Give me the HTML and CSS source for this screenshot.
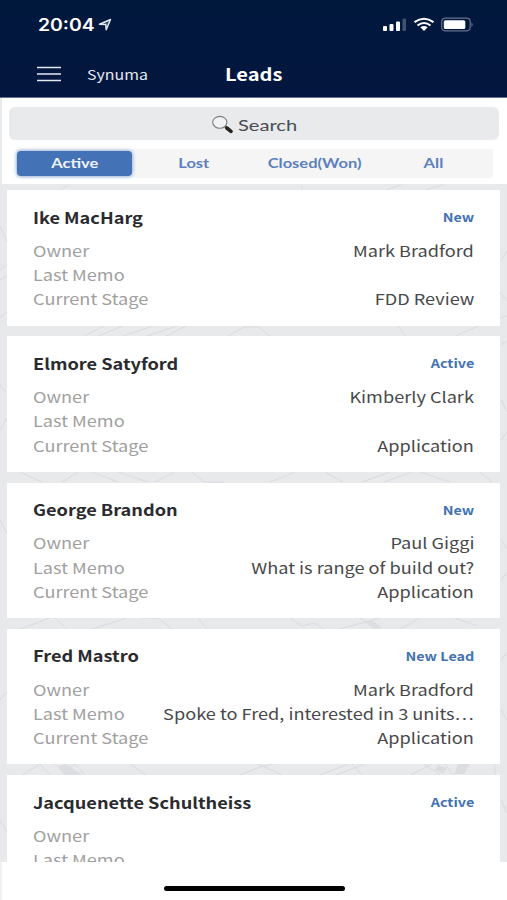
FILE: index.html
```html
<!DOCTYPE html>
<html lang="en">
<head>
<meta charset="utf-8">
<title>Leads</title>
<link rel="stylesheet" href="styles.css">
</head>
<body>
<div class="screen">
  <header class="top">
    <div class="status">
      <span class="time">20:04</span>
      <svg class="loc" width="15" height="14" viewBox="0 0 15 14"><path d="M1.500 6.200 12.500 1.500 8.200 11.800 7.800 6.600Z" fill="#dfe5f0" fill-opacity=".25" stroke="#dfe5f0" stroke-width="1.500" stroke-linejoin="round"/></svg>
      <svg class="sys" width="92" height="16" viewBox="0 0 92 16">
        <g fill="#fff"><rect x="0" y="9" width="4" height="5" rx="1"/><rect x="6.500" y="7" width="4" height="7" rx="1"/><rect x="13" y="4.500" width="4" height="9.500" rx="1"/><rect x="19.500" y="1.500" width="3.500" height="12.500" rx="1" opacity=".25"/></g>
        <g fill="none" stroke="#fff" stroke-width="2.100"><path d="M31.500 5.200Q41 -1.800 50.500 5.200"/><path d="M34.500 8.500Q41 3.500 47.500 8.500"/></g>
        <path d="M37.400 10.300Q41 7.500 44.600 10.300L41 14Z" fill="#fff"/>
        <rect x="58.700" y="1.200" width="28.500" height="12.600" rx="3.500" fill="none" stroke="#66728d" stroke-width="1.200"/>
        <rect x="60.800" y="3.200" width="21.500" height="8.800" rx="1.600" fill="#fff"/>
        <path d="M88.500 5.200Q91 7.500 88.500 9.800Z" fill="#66728d"/>
      </svg>
    </div>
    <nav class="nav">
      <svg class="menu" width="24" height="16" viewBox="0 0 24 16"><path d="M0 1.500H24M0 8H24M0 14.500H24" stroke="#e4e8f1" stroke-width="1.700"/></svg>
      <span class="brand">Synuma</span>
      <h1 class="title">Leads</h1>
    </nav>
  </header>
  <section class="filters">
    <div class="search">
      <svg width="24" height="20" viewBox="0 0 24 20"><ellipse cx="8.800" cy="7.300" rx="7.100" ry="5.900" fill="#f1f2f4" stroke="#7d8084" stroke-width="1.100"/><path d="m13.600 11.500 2 1.500" stroke="#777" stroke-width="1.500"/><path d="m15.800 13 4.200 3.400" stroke="#242424" stroke-width="3.700" stroke-linecap="round"/></svg>
      <span class="hint">Search</span>
    </div>
    <div class="tabs">
      <div class="tab on"><span>Active</span></div>
      <div class="tab"><span>Lost</span></div>
      <div class="tab"><span>Closed(Won)</span></div>
      <div class="tab"><span>All</span></div>
    </div>
  </section>
  <main class="list">
    <svg class="map" width="507" height="678" viewBox="0 184 507 678">
      <g fill="none" stroke="#d6d7da" stroke-width=".8"><path d="M84 336l20-10M98 336l25-10M123 336l30-10M147 336l30-10M166 336l20-10M228 336l16-9h14l12 9M398 326l7 10M455 336l33-14 19-6M500 292l7 9M501 260l6-9M501 345l6-4M0 226l7 16M0 270l7-5M0 280l7-4M0 318l7-6M0 385l7 8M0 430l7-12M0 520l7 14M0 700l7-8M0 820l7 12"/><path d="M20 472l22 10M62 482l16-10M92 472l26 10M118 472l30 10M155 482l20-10M192 472l12 10h20M270 482l25-10M325 472l18 10M362 482l28-10M384 482l28-10M420 472l30 10M480 472l12 10M501 400l6 12M501 440l6-8M501 540l6 9M501 580l6-8"/><path d="M20 629l30-11M55 618l12 11M92 629l35-11M140 618h18l14 11M198 618l9 11M290 618l12 8 12-3 10 6M340 629l40-11M360 618l20 11M400 629l20-11M455 618l22 8M501 660l6-8M501 710l6 10M501 800l6 13"/><path d="M22 775l18-11 10 11M55 764l8 8 12-8 10 11M130 764l16 11M240 775l20-8 13-3M258 764l24 11M320 775l28-11M336 775l28-11M352 764l10 11M410 775l22-11M424 764l16 11M445 764l8 11M495 764v11M302 190v-4M386 190l15-5M425 190l18-5M60 190l8-5"/></g>
      <g fill="#dcdde0"><path d="M64 775l-6-9 8-2 16 11zM438 765l9 3-4 6-8-4zM458 764h12l-6 10h-10zM372 620l10 8-8 1-8-6z"/></g>
    </svg>
    <article class="card">
      <div class="head"><b class="name">Ike MacHarg</b><b class="state">New</b></div>
      <div class="row"><span class="key">Owner</span><span class="val">Mark Bradford</span></div>
      <div class="row"><span class="key">Last Memo</span></div>
      <div class="row"><span class="key">Current Stage</span><span class="val">FDD Review</span></div>
    </article>
    <article class="card">
      <div class="head"><b class="name">Elmore Satyford</b><b class="state">Active</b></div>
      <div class="row"><span class="key">Owner</span><span class="val">Kimberly Clark</span></div>
      <div class="row"><span class="key">Last Memo</span></div>
      <div class="row"><span class="key">Current Stage</span><span class="val">Application</span></div>
    </article>
    <article class="card">
      <div class="head"><b class="name">George Brandon</b><b class="state">New</b></div>
      <div class="row"><span class="key">Owner</span><span class="val">Paul Giggi</span></div>
      <div class="row"><span class="key">Last Memo</span><span class="val">What is range of build out?</span></div>
      <div class="row"><span class="key">Current Stage</span><span class="val">Application</span></div>
    </article>
    <article class="card">
      <div class="head"><b class="name">Fred Mastro</b><b class="state">New Lead</b></div>
      <div class="row"><span class="key">Owner</span><span class="val">Mark Bradford</span></div>
      <div class="row"><span class="key">Last Memo</span><span class="val">Spoke to Fred, interested in 3 units…</span></div>
      <div class="row"><span class="key">Current Stage</span><span class="val">Application</span></div>
    </article>
    <article class="card">
      <div class="head"><b class="name">Jacquenette Schultheiss</b><b class="state">Active</b></div>
      <div class="row"><span class="key">Owner</span></div>
      <div class="row"><span class="key">Last Memo</span></div>
    </article>
  </main>
  <footer class="bottom"><div class="home"></div></footer>
</div>
</body>
</html>
```
FILE: styles.css
```css
* { box-sizing: border-box; }
body { margin: 0; background: #fff; font-family: "Noto Sans CJK SC", "Noto Sans", sans-serif; }
.screen { width: 507px; height: 900px; display: flex; flex-direction: column; overflow: hidden; }
.top { height: 98px; flex: none; background: linear-gradient(#01183d, #03163f); border-bottom: 1px solid #66718b; color: #fff; }
.status { height: 49px; padding: 0 32px 0 38px; display: flex; align-items: center; }
.time { font: 600 17px/20px Inter, sans-serif; width: 57px; white-space: nowrap; transform: scaleX(1.14); transform-origin: left; }
.loc { margin-left: 3px; }
.sys { margin-left: auto; }
.nav { height: 49px; padding-left: 37px; display: grid; grid-template-columns: 50px 138px 1fr; align-items: center; }
.brand { font: 400 13.5px/20px "Noto Sans CJK SC", sans-serif; color: #e2e7f1; transform: scaleX(1.18); transform-origin: left; }
.title { margin: 0; font-size: 17px; line-height: 24px; font-weight: 700; transform: scaleX(1.18); transform-origin: left; }

.filters { height: 86px; flex: none; background: #fff; border-left: 2px solid #e9eaed; padding: 9px 8px 0 7px; }
.search { height: 33px; border-radius: 6px; background: #e9eaec; display: flex; align-items: center; padding: 2px 0 0 202px; }
.hint { margin-left: 3px; font: 400 15px/20px Lato, sans-serif; color: #4b4c4f; transform: scaleX(1.34); transform-origin: left; }
.tabs { height: 29px; margin: 9px 6px 0 7px; border-radius: 3px; background: #f5f5f5; display: grid; grid-template-columns: 116px 124px 117px 1fr; align-items: center; }
.tab { text-align: center; font: 700 12.500px/26px Lato, sans-serif; color: #5c80bd; }
.tab span { display: inline-block; transform: scaleX(1.32); }
.tab.on { height: 25px; margin: 0 0 0 1px; border-radius: 4px; background: #4372b7; color: #f1f5fb; box-shadow: 0 0 4px #6f94cd; }

.list { height: 678px; flex: none; position: relative; overflow: hidden; background: #e8e9eb; padding: 6px 7px 0; display: flex; flex-direction: column; gap: 10.800px; }
.map { position: absolute; left: 0; top: 0; }
.card { position: relative; flex: none; height: 135.500px; background: #fff; padding: 12.500px 26px 0; }
.head, .row { display: flex; justify-content: space-between; align-items: center; white-space: nowrap; }
.head { height: 28px; margin-bottom: 8px; }
.row { height: 24.400px; font-size: 15px; line-height: 24px; }
.name { transform: scaleX(1.172); transform-origin: left; }
.key { transform: scaleX(1.21); transform-origin: left; }
.state { transform: scaleX(1.2); transform-origin: right; }
.val { transform: scaleX(1.21); transform-origin: right; }
.name { font-size: 15.500px; color: #2a2b2e; }
.state { font-size: 12px; color: #4372b4; }
.key { color: #a0a0a1; }
.val { color: #48484a; }

.bottom { height: 38px; flex: none; background: #fff; border-left: 2px solid #f1f1f3; display: flex; justify-content: center; padding-top: 24px; }
.home { width: 181px; height: 5px; border-radius: 3px; background: #000; }
```
